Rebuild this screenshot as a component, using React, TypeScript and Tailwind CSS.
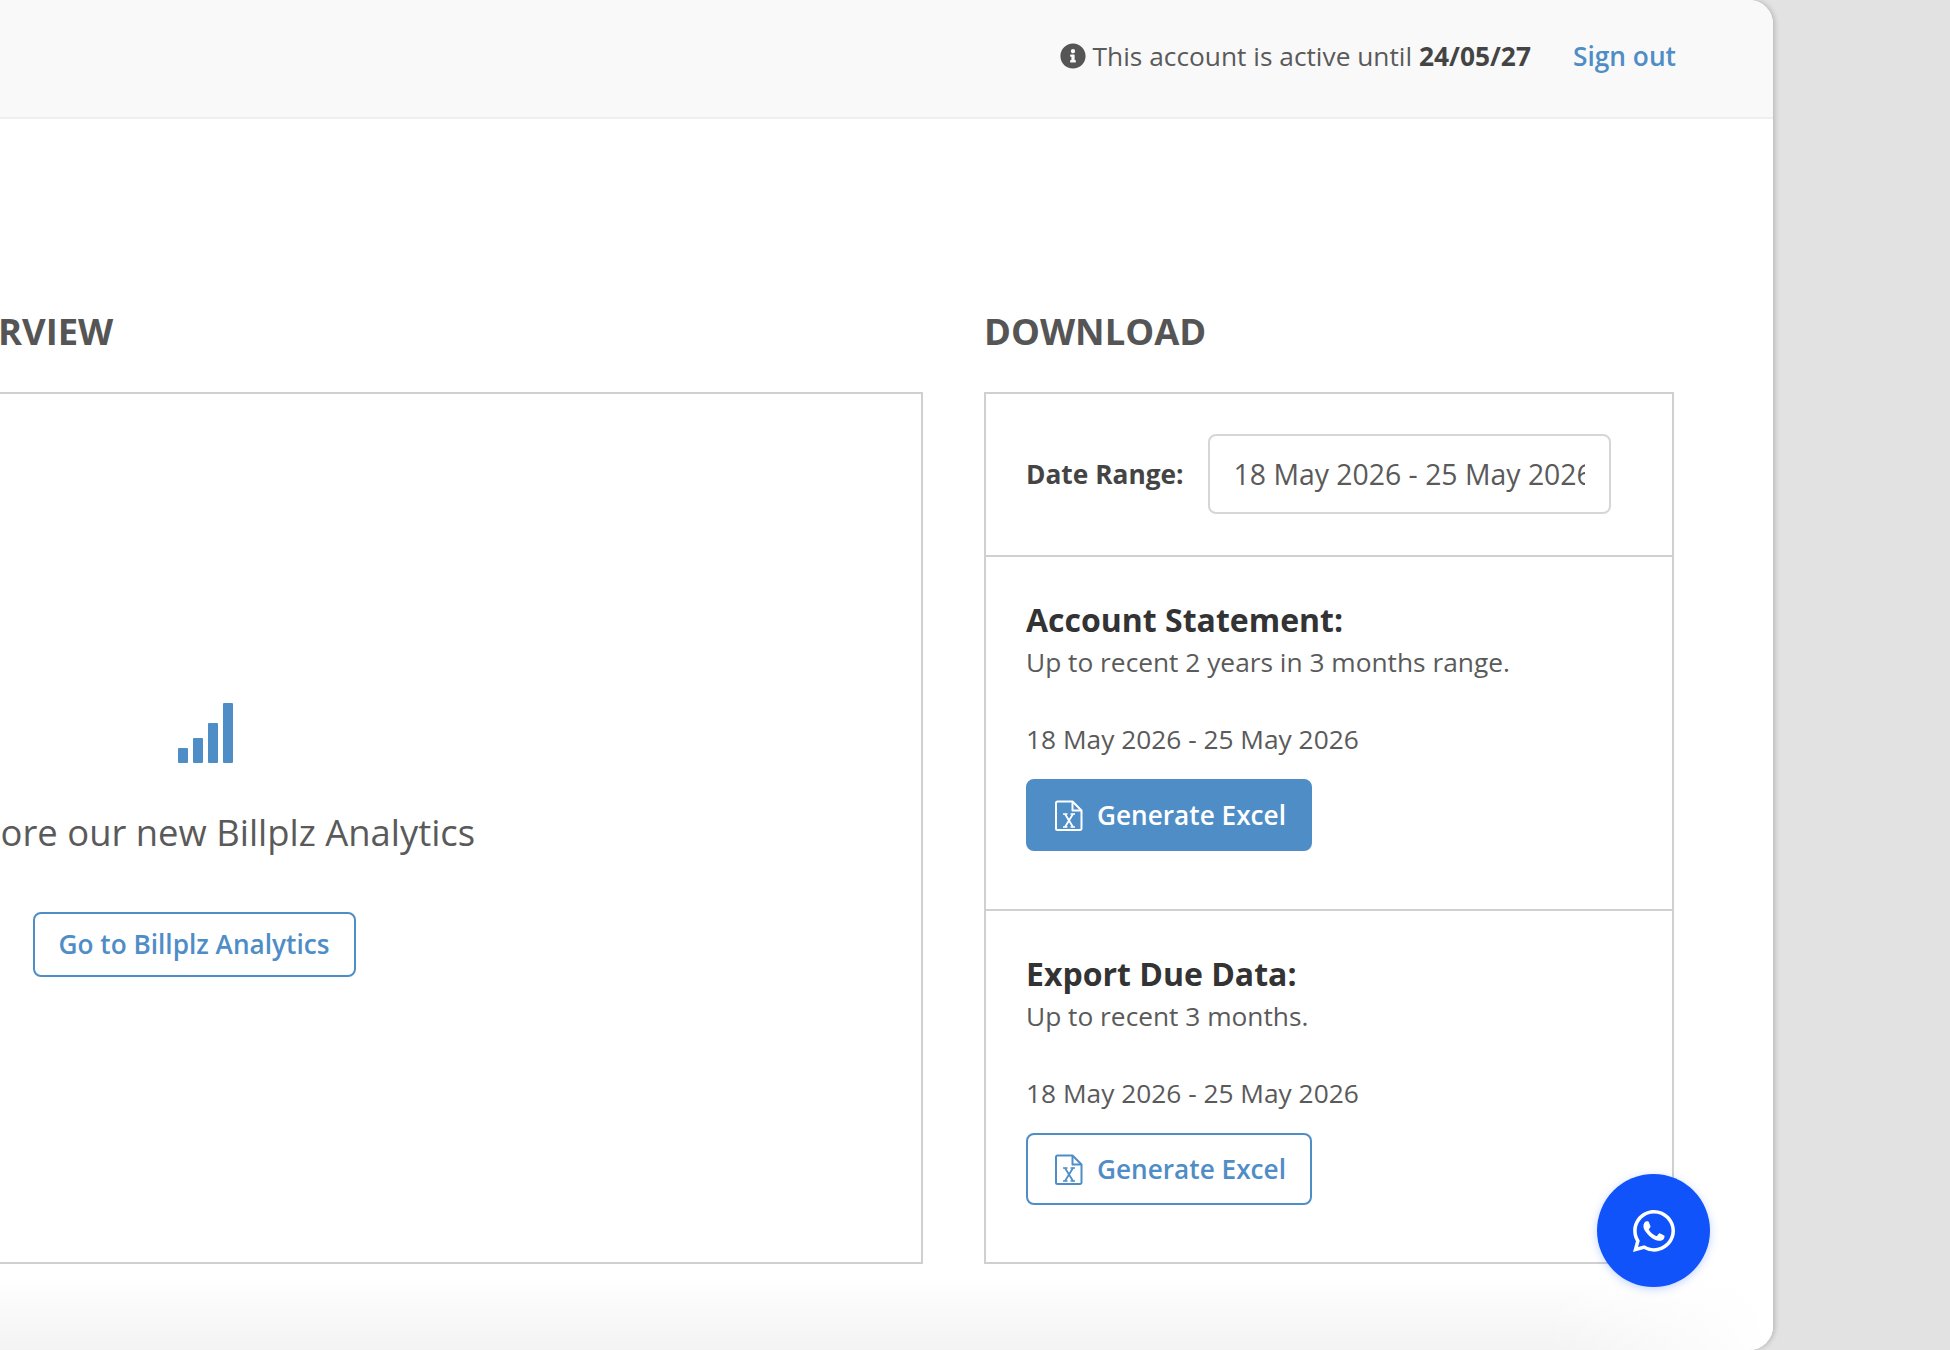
import { FaInfoCircle, FaWhatsapp } from 'react-icons/fa'

function ExcelIcon() {
  return (
    <svg viewBox="0 0 28 31" className="w-[28px] h-[31px] shrink-0 -translate-y-[1px]" fill="none" stroke="currentColor" strokeWidth="2" strokeLinejoin="round">
      <path d="M2.500 1.500h15l9 9v18a1.500 1.500 0 0 1-1.500 1.500h-22.500a1.500 1.500 0 0 1-1.500-1.500v-25.500a1.500 1.500 0 0 1 1.500-1.500z" />
      <path d="M17.500 1.500v9h9" />
      <path d="M8 14h4.500M15.500 14h4.500M8 27h4.500M15.500 27h4.500" strokeWidth="1.500" />
      <path d="M10 14l8 13M18 14l-8 13" strokeWidth="1.800" />
    </svg>
  )
}

function BarsIcon() {
  return (
    <svg viewBox="0 0 57 60" className="w-[57px] h-[60px] ml-[24px]" fill="#4f8dc6">
      <rect x="0" y="45" width="10" height="15" rx="1" />
      <rect x="15" y="35" width="10" height="25" rx="1" />
      <rect x="30" y="20" width="10" height="40" rx="1" />
      <rect x="45" y="0" width="10" height="60" rx="1" />
    </svg>
  )
}

function ExportBlock({ title, note, solid, className }: { title: string; note: string; solid?: boolean; className: string }) {
  return (
    <div className={className}>
      <h3 className="text-[32px] leading-[40px] font-bold text-[#333]">{title}</h3>
      <p className="mt-[4px] text-[26.3px] leading-[36px] text-[#5a5a5a]">{note}</p>
      <p className="mt-[41px] text-[26.3px] leading-[36px] text-[#5a5a5a]">18 May 2026 - 25 May 2026</p>
      <button
        type="button"
        className={
          solid
            ? 'mt-[22px] flex items-center gap-[14px] w-[286px] h-[72px] pl-[27px] pt-[2px] rounded-lg border-2 border-[#4f8dc6] bg-[#4f8dc6] text-[26.2px] font-semibold text-white'
            : 'mt-[22px] flex items-center gap-[14px] w-[286px] h-[72px] pl-[27px] pt-[2px] rounded-lg border-2 border-[#4f8dc6] bg-white text-[26.2px] font-semibold text-[#4f8dc6]'
        }
      >
        <ExcelIcon />
        Generate Excel
      </button>
    </div>
  )
}

export default function App() {
  return (
    <div className="relative flex h-screen w-full overflow-hidden bg-[#e2e2e2] font-['Open_Sans',sans-serif]">
      <div className="ml-[-160px] flex w-[1933px] shrink-0 flex-col overflow-hidden rounded-r-[24px] bg-white shadow-[2px_0_5px_rgba(0,0,0,0.18)]">
        <header className="flex h-[119px] shrink-0 items-center justify-end border-b-2 border-[#efefef] bg-[#f9f9f9] pr-[97px] pb-[3px] text-[26.3px] text-[#5a5a5a]">
          <FaInfoCircle className="mr-[7px] h-[26px] w-[26px] -translate-y-[1px] text-[#555]" />
          <span>
            This account is active until <b className="font-bold text-[#444]">24/05/27</b>
          </span>
          <a className="ml-[42px] font-semibold text-[#4f8dc6]">Sign out</a>
        </header>

        <main className="flex shrink-0 gap-[61px] pt-[190px] pl-[85px] pr-[99px]">
          <section className="flex w-[998px] shrink-0 flex-col">
            <h2 className="mb-[39px] h-[44px] text-[36.4px] leading-[44px] font-bold text-[#555]">OVERVIEW</h2>
            <div className="flex flex-1 flex-col items-center justify-center border-2 border-[#d0d0d0] pt-[24px] pr-[460px]">
              <BarsIcon />
              <p className="mt-[45px] ml-[17px] text-[36.4px] leading-[48px] whitespace-nowrap text-[#5a5a5a]">Explore our new Billplz Analytics</p>
              <button type="button" className="mt-[56px] h-[65px] w-[323px] rounded-lg border-2 border-[#4f8dc6] text-[26.2px] font-semibold text-[#4f8dc6]">
                Go to Billplz Analytics
              </button>
            </div>
          </section>

          <section className="w-[690px] shrink-0">
            <h2 className="mb-[39px] h-[44px] text-[36.4px] leading-[44px] font-bold text-[#555]">DOWNLOAD</h2>
            <div className="h-[872px] border-2 border-[#d0d0d0]">
              <div className="flex h-[163px] items-center border-b-2 border-[#d0d0d0] px-[40px] pb-[1px]">
                <label className="mt-[2px] text-[26.3px] font-bold text-[#444]">Date Range:</label>
                <input
                  readOnly
                  value="18 May 2026 - 25 May 2026"
                  className="ml-[24px] h-[80px] w-[403px] rounded-lg border-2 border-[#d6d6d6] px-[24px] text-[28.4px] text-[#5a5a5a] outline-none"
                />
              </div>
              <ExportBlock
                className="h-[354px] border-b-2 border-[#d0d0d0] px-[40px] pt-[43px]"
                title="Account Statement:"
                note="Up to recent 2 years in 3 months range."
                solid
              />
              <ExportBlock
                className="px-[40px] pt-[43px]"
                title="Export Due Data:"
                note="Up to recent 3 months."
              />
            </div>
          </section>
        </main>

        <div className="flex-1 bg-[linear-gradient(to_right,transparent_88%,white),linear-gradient(to_bottom,white_15%,#f3f3f3)]" />
      </div>

      <button type="button" className="absolute right-[240px] bottom-[63px] flex h-[113px] w-[113px] items-center justify-center rounded-full bg-[#1053fb] text-white shadow-[0_2px_8px_rgba(16,83,251,0.25)]">
        <FaWhatsapp className="h-[48px] w-[48px]" />
      </button>
    </div>
  )
}
